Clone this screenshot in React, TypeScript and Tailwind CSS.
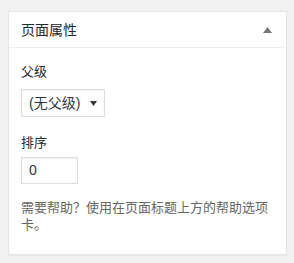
export default function App() {
  const font = { fontFamily: '"Liberation Sans", "Noto Sans CJK SC", sans-serif' };
  return (
    <div className="h-[263px] w-[294px] bg-[#f1f1f1] pt-[11px] pl-[8px]" style={font}>
      <div className="w-[279px] border border-[#e5e5e5] bg-white shadow-[0_1px_1px_rgba(0,0,0,0.04)]">
        <div className="flex h-[36px] items-center justify-between border-b border-[#eeeeee] pl-[12px] pr-[14px]">
          <h2 className="text-[14px] leading-[20px] text-[#23282d]">页面属性</h2>
          <svg width="9" height="6" viewBox="0 0 9 6" className="mt-[1px]">
            <polygon points="4.5,0 9,6 0,6" fill="#72777c" />
          </svg>
        </div>
        <div className="px-[12px] pb-[21px]">
          <p className="mt-[15px] text-[13px] leading-[18px] text-[#23282d]">父级</p>
          <div className="mt-[8px] flex h-[28px] w-[84px] items-center justify-between border border-[#dddddd] pl-[7px] pr-[7px] text-[14px] text-[#32373c] shadow-[inset_0_1px_2px_rgba(0,0,0,0.07)]">
            <span>(无父级)</span>
            <svg width="7" height="5" viewBox="0 0 7 5">
              <polygon points="0,0 7,0 3.5,5" fill="#333" />
            </svg>
          </div>
          <p className="mt-[17px] text-[13px] leading-[18px] text-[#23282d]">排序</p>
          <div className="mt-[5px] flex h-[27px] w-[57px] items-center border border-[#dddddd] pl-[7px] text-[14px] text-[#32373c] shadow-[inset_0_1px_2px_rgba(0,0,0,0.07)]">
            0
          </div>
          <p className="mt-[15px] text-[13px] leading-[17px] text-[#666666]">
            需要帮助？使用在页面标题上方的帮助选项卡。
          </p>
        </div>
      </div>
    </div>
  );
}
